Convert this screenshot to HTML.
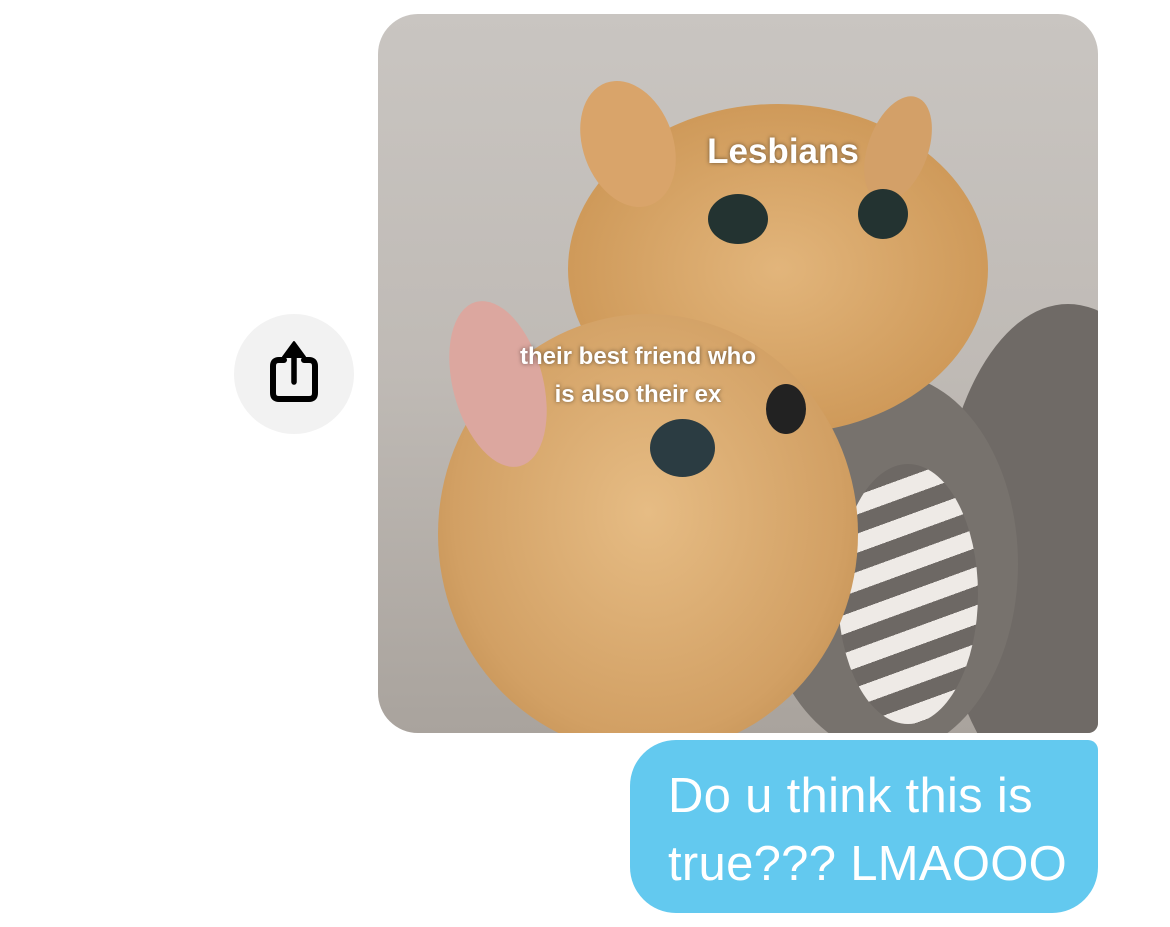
<!DOCTYPE html>
<html><head><style>
body{margin:0;width:1170px;height:927px;background:#fff;overflow:hidden;position:relative;font-family:"Liberation Sans",sans-serif}
.img{position:absolute;left:378px;top:14px;width:720px;height:719px;border-radius:40px 40px 10px 40px;overflow:hidden;background:linear-gradient(180deg,#c9c5c1 0%,#bfbab5 50%,#a9a39d 100%)}
.e{position:absolute;border-radius:50%}
.t{position:absolute;color:#fff;font-weight:bold;text-align:center;text-shadow:0 0 4px rgba(0,0,0,.5)}
.bub{position:absolute;left:630px;top:740px;width:468px;height:173px;background:#63c9ef;border-radius:46px 10px 46px 46px;box-sizing:border-box;padding:22px 0 0 38px;color:#fff;font-size:49px;line-height:68px;letter-spacing:0.3px}
</style></head><body>
<div style="position:absolute;left:234px;top:314px;width:120px;height:120px;border-radius:50%;background:#f2f2f2"></div>
<svg style="position:absolute;left:264px;top:338px" width="60" height="68" viewBox="0 0 60 68">
<path d="M20 22 H15 Q9 22 9 28 V55 Q9 61 15 61 H45 Q51 61 51 55 V28 Q51 22 45 22 H40" fill="none" stroke="#000" stroke-width="6" stroke-linejoin="round" stroke-linecap="round"/>
<path d="M30 44 V12" stroke="#000" stroke-width="5.5" stroke-linecap="round"/>
<path d="M19 19 L30 4 L41 19 Z" fill="#000" stroke="#000" stroke-width="2" stroke-linejoin="round"/>
</svg>
<div class="img">
 <div class="e" style="left:560px;top:290px;width:260px;height:500px;background:#6f6a66"></div>
 <div class="e" style="left:380px;top:360px;width:260px;height:380px;background:#77726d"></div>
 <div class="e" style="left:460px;top:450px;width:140px;height:260px;background:repeating-linear-gradient(160deg,#eeeae6 0 18px,#6d6864 18px 36px)"></div>
 <div class="e" style="left:190px;top:90px;width:420px;height:330px;background:radial-gradient(ellipse at 50% 50%,#e2b57b,#cf9a5a 70%,#b88347)"></div>
 <div class="e" style="left:205px;top:65px;width:90px;height:130px;background:#d9a46a;transform:rotate(-20deg)"></div>
 <div class="e" style="left:490px;top:80px;width:60px;height:110px;background:#d3a068;transform:rotate(20deg)"></div>
 <div class="e" style="left:60px;top:300px;width:420px;height:440px;background:radial-gradient(ellipse at 50% 45%,#e6bc84,#d2a064 65%,#b78446)"></div>
 <div class="e" style="left:75px;top:285px;width:90px;height:170px;background:#dca79f;transform:rotate(-15deg)"></div>
 <div class="e" style="left:330px;top:180px;width:60px;height:50px;background:#233331"></div>
 <div class="e" style="left:480px;top:175px;width:50px;height:50px;background:#233331"></div>
 <div class="e" style="left:272px;top:405px;width:65px;height:58px;background:#2b3c42"></div>
 <div class="e" style="left:388px;top:370px;width:40px;height:50px;background:#222"></div>
 <div class="t" style="left:300px;top:118px;width:210px;font-size:35px">Lesbians</div>
 <div class="t" style="left:100px;top:324px;width:320px;font-size:24px;line-height:38px">their best friend who<br>is also their ex</div>
</div>
<div class="bub">Do u think this is<br>true??? LMAOOO</div>
</body></html>
